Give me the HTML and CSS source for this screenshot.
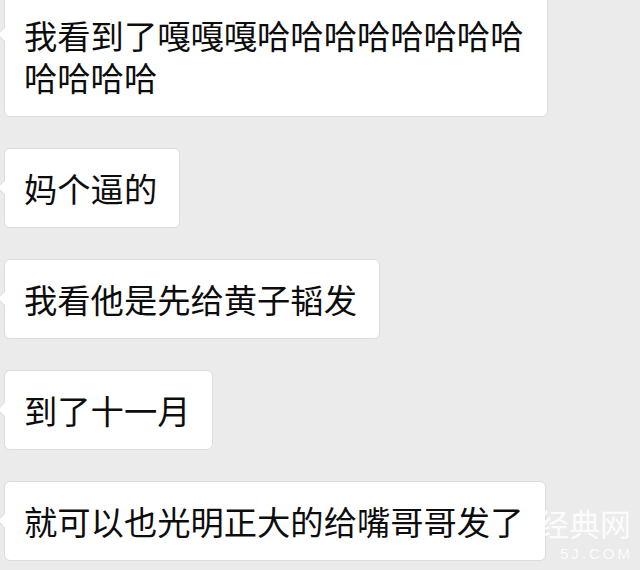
FILE: index.html
```html
<!DOCTYPE html>
<html lang="zh-CN">
<head>
    <meta charset="UTF-8">
    <meta name="viewport" content="width=device-width, initial-scale=1.0">
    <title>聊天记录</title>
    <link rel="stylesheet" href="styles.css">
</head>
<body>
    <div class="chat">
        <div class="bubble">我看到了嘎嘎嘎哈哈哈哈哈哈哈哈哈哈哈哈</div>
        <div class="bubble">妈个逼的</div>
        <div class="bubble">我看他是先给黄子韬发</div>
        <div class="bubble">到了十一月</div>
        <div class="bubble">就可以也光明正大的给嘴哥哥发了</div>
    </div>
    <div class="watermark">
        <span class="watermark-name">经典网</span>
        <span class="watermark-url">5J.COM</span>
    </div>
</body>
</html>
```

FILE: styles.css
```css
body {
    margin: 0;
    background-color: #ebebeb;
    font-family: "Noto Sans CJK SC", "Noto Sans", sans-serif;
    color: #0d0d0d;
    overflow: hidden;
    position: relative;
    min-height: 570px;
}
.chat {
    display: flex;
    flex-direction: column;
    align-items: flex-start;
    gap: 31px;
    margin-top: -5px;
    padding-left: 4px;
}
.bubble {
    position: relative;
    box-sizing: border-box;
    max-width: 544px;
    padding: 18px 22px 18px 19px;
    background: #ffffff;
    border: 1px solid #dcdcdc;
    border-radius: 6px;
    font-size: 33.3px;
    line-height: 42px;
}
.bubble::before {
    content: "";
    position: absolute;
    left: -6px;
    top: 33px;
    width: 10px;
    height: 10px;
    background: #ffffff;
    border-left: 1px solid #dcdcdc;
    border-bottom: 1px solid #dcdcdc;
    transform: rotate(45deg);
}
.watermark {
    position: absolute;
    right: 9px;
    top: 504px;
    display: flex;
    flex-direction: column;
    align-items: flex-end;
    gap: 4px;
    color: rgba(255, 255, 255, 0.85);
}
.watermark-name {
    font-size: 31px;
    line-height: 38px;
}
.watermark-url {
    font-family: "Liberation Sans", sans-serif;
    font-size: 15px;
    line-height: 16px;
    letter-spacing: 3px;
    margin-right: -2px;
}
```
